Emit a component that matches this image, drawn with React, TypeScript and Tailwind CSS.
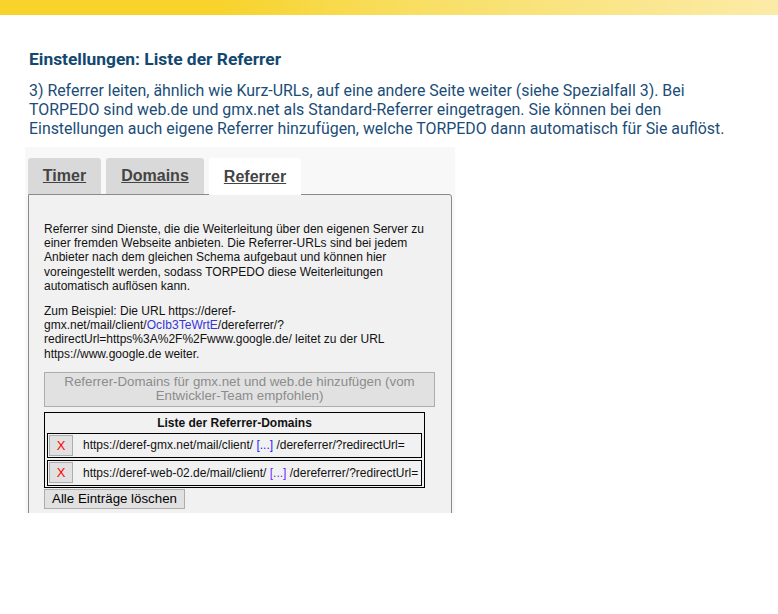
import React from "react";

const arial = { fontFamily: '"Liberation Sans", Arial, sans-serif' };

export default function App() {
  return (
    <div className="w-[778px] h-[614px] bg-white overflow-hidden relative" style={{ fontFamily: 'Roboto, "Liberation Sans", sans-serif' }}>
      <div className="h-[15px] w-full bg-[linear-gradient(to_right,#f7d32b_0%,#f7d32b_28%,#f8df66_55%,#fceba8_100%)]" />
      <div className="pl-[29px] pr-4">
        <h1 className="mt-[33px] text-[17.4px] leading-[22px] font-bold text-[#124870]">Einstellungen: Liste der Referrer</h1>
        <p className="mt-[11px] text-[15.9px] leading-[19px] text-[#1b4d78]">
          3) Referrer leiten, ähnlich wie Kurz-URLs, auf eine andere Seite weiter (siehe Spezialfall 3). Bei<br />
          TORPEDO sind web.de und gmx.net als Standard-Referrer eingetragen. Sie können bei den<br />
          Einstellungen auch eigene Referrer hinzufügen, welche TORPEDO dann automatisch für Sie auflöst.
        </p>
      </div>

      <div className="ml-[25px] mt-[9px] w-[430px] h-[366px] bg-[#f8f8f8] overflow-hidden pl-[3px] pt-[11px]" style={arial}>
        <div className="flex gap-[5px] h-[36px] items-stretch">
          <div className="w-[73px] bg-[#d9d9d9] rounded-t-[3px] flex items-center justify-center text-[16px] font-bold underline text-[#444]">Timer</div>
          <div className="w-[98px] bg-[#d9d9d9] rounded-t-[3px] flex items-center justify-center text-[16px] font-bold underline text-[#444]">Domains</div>
          <div className="w-[92px] bg-white rounded-t-[3px] flex items-center justify-center text-[16px] font-bold underline text-[#444] relative z-10 h-[37px]">Referrer</div>
        </div>
        <div className="w-[424px] h-[400px] border border-[#8a8a8a] rounded-tr-[3px] bg-[#f1f1f1] pl-[15px] pr-[2px] pt-[27px] text-[#111]">
          <p className="text-[12px] leading-[14.2px] whitespace-nowrap">
            Referrer sind Dienste, die die Weiterleitung über den eigenen Server zu<br />
            einer fremden Webseite anbieten. Die Referrer-URLs sind bei jedem<br />
            Anbieter nach dem gleichen Schema aufgebaut und können hier<br />
            voreingestellt werden, sodass TORPEDO diese Weiterleitungen<br />
            automatisch auflösen kann.
          </p>
          <p className="text-[12px] leading-[14.2px] mt-[11px] whitespace-nowrap">
            Zum Beispiel: Die URL https://deref-<br />
            gmx.net/mail/client/<span className="text-[#3535d8]">OcIb3TeWrtE</span>/dereferrer/?<br />
            redirectUrl=https%3A%2F%2Fwww.google.de/ leitet zu der URL<br />
            https://www.google.de weiter.
          </p>
          <button className="block mt-[11px] w-[391px] h-[35px] bg-[#e1e1e1] border border-[#adadad] text-[13.3px] leading-[14.3px] text-[#8c8c8c] px-2">
            Referrer-Domains für gmx.net und web.de hinzufügen (vom<br />Entwickler-Team empfohlen)
          </button>
          <div className="mt-[5px] w-[381px] border border-black px-[2px] pb-[1px]">
            <div className="text-[12px] font-bold text-center leading-[14px] py-[3px]">Liste der Referrer-Domains</div>
            <div className="h-[25px] border border-black flex items-center pl-[1px]">
              <div className="w-[24px] h-[21px] bg-[#e1e1e1] border border-[#adadad] flex items-center justify-center text-[#f00] text-[13px]">X</div>
              <div className="ml-[10px] text-[12px] whitespace-nowrap">https://deref-gmx.net/mail/client/ <span className="text-[#1f1fff]">[...]</span> /dereferrer/?redirectUrl=</div>
            </div>
            <div className="mt-[2px] h-[26px] border border-black flex items-center pl-[1px] overflow-hidden">
              <div className="w-[24px] h-[21px] shrink-0 bg-[#e1e1e1] border border-[#adadad] flex items-center justify-center text-[#f00] text-[13px]">X</div>
              <div className="ml-[10px] text-[12px] whitespace-nowrap">https://deref-web-02.de/mail/client/ <span className="text-[#6a2bff]">[...]</span> /dereferrer/?redirectUrl=</div>
            </div>
          </div>
          <button className="block mt-[1px] w-[141px] h-[20px] bg-[#e1e1e1] border border-[#adadad] text-[13.3px] leading-[16px] text-black">Alle Einträge löschen</button>
        </div>
      </div>
    </div>
  );
}
